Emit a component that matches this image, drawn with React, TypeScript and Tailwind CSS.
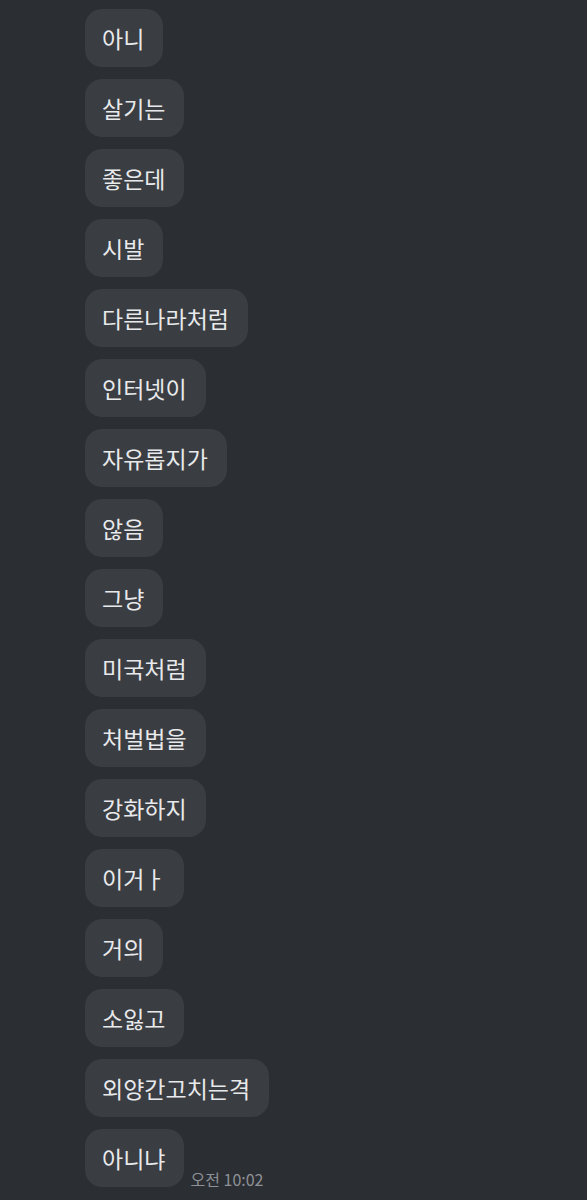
const messages = [
  '아니',
  '살기는',
  '좋은데',
  '시발',
  '다른나라처럼',
  '인터넷이',
  '자유롭지가',
  '않음',
  '그냥',
  '미국처럼',
  '처벌법을',
  '강화하지',
  '이거ㅏ',
  '거의',
  '소잃고',
  '외양간고치는격',
  '아니냐',
]

export default function App() {
  return (
    <div
      className="min-h-[1200px] w-full bg-[#2b2e33] pt-[9px] pl-[85px]"
      style={{ fontFamily: '"Noto Sans CJK KR", "Noto Sans", sans-serif' }}
    >
      <div className="flex flex-col gap-[12px]">
        {messages.map((m, i) => (
          <div key={i} className="flex items-end gap-[6px]">
            <div className="flex h-[58px] items-center rounded-[17px] bg-[#3a3d42] pl-[17px] pr-[19px] text-[23px] text-[#e8e9eb]">
              {m}
            </div>
            {i === messages.length - 1 && (
              <span className="mb-[-3px] text-[16px] leading-[22px] text-[#8e9196]">오전 10:02</span>
            )}
          </div>
        ))}
      </div>
    </div>
  )
}
